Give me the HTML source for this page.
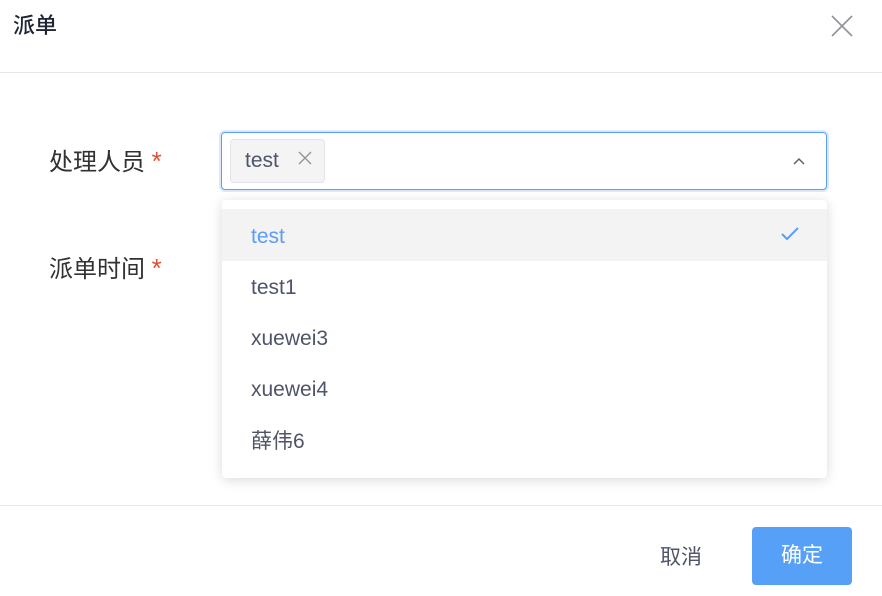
<!DOCTYPE html>
<html><head><meta charset="utf-8"><style>
*{margin:0;padding:0;box-sizing:border-box}
body{width:882px;height:596px;background:#fff;position:relative;overflow:hidden;font-family:"Liberation Sans","Noto Sans CJK SC",sans-serif;color:#606266}
.abs{position:absolute}
</style></head><body>
<div class="abs" style="left:13px;top:10px;font-size:22px;color:#1f2633;line-height:32px;font-weight:500">派单</div>
<svg class="abs" style="left:830px;top:14px" width="24" height="24" viewBox="0 0 24 24"><path d="M2 2L22 22M22 2L2 22" stroke="#909399" stroke-width="1.6" fill="none"/></svg>
<div class="abs" style="left:0;top:72px;width:882px;height:1px;background:#e4e7ed"></div>
<div class="abs" style="left:49px;top:145px;font-size:24px;line-height:32px;color:#303133">处理人员 <span style="color:#e0502f;font-size:26px">*</span></div>
<div class="abs" style="left:49px;top:252px;font-size:24px;line-height:32px;color:#303133">派单时间 <span style="color:#e0502f;font-size:26px">*</span></div>
<div class="abs" style="left:221px;top:132px;width:606px;height:58px;border:1px solid #5a9cf8;border-radius:4px;box-shadow:0 0 0 2px #dbe9fd"></div>
<div class="abs" style="left:230px;top:139px;width:95px;height:44px;background:#f4f4f5;border:1px solid #e4e4e7;border-radius:4px"></div>
<div class="abs" style="left:245px;top:147px;font-size:21px;line-height:28px;color:#4f5568">test</div>
<svg class="abs" style="left:298px;top:151px" width="14" height="14"><path d="M1 1L13 13M13 1L1 13" stroke="#909399" stroke-width="1.3"/></svg>
<svg class="abs" style="left:792px;top:156px" width="14" height="10"><path d="M2 8L7 3L12 8" stroke="#606266" stroke-width="1.5" fill="none"/></svg>
<div class="abs" style="left:222px;top:200px;width:605px;height:278px;background:#fff;border-radius:4px;box-shadow:0 2px 12px rgba(0,0,0,0.15)"></div>
<div class="abs" style="left:222px;top:209px;width:605px;height:52px;background:#f3f3f3"></div>
<div class="abs" style="left:251px;top:223px;font-size:21px;line-height:28px;color:#5a9cf8">test</div>
<svg class="abs" style="left:780px;top:226px" width="20" height="16"><path d="M2 8L7 13L18 2" stroke="#5a9cf8" stroke-width="2" fill="none"/></svg>
<div class="abs" style="left:251px;top:274px;font-size:21px;line-height:28px;color:#4f5568">test1</div>
<div class="abs" style="left:251px;top:325px;font-size:21px;line-height:28px;color:#4f5568">xuewei3</div>
<div class="abs" style="left:251px;top:376px;font-size:21px;line-height:28px;color:#4f5568">xuewei4</div>
<div class="abs" style="left:251px;top:428px;font-size:21px;line-height:28px;color:#4f5568">薛伟6</div>
<div class="abs" style="left:0;top:505px;width:882px;height:1px;background:#e4e7ed"></div>
<div class="abs" style="left:660px;top:543px;font-size:21px;line-height:30px;color:#4f5568">取消</div>
<div class="abs" style="left:752px;top:527px;width:100px;height:58px;background:#57a0f8;border-radius:4px;color:#fff;font-size:21px;line-height:58px;text-align:center">确定</div>
</body></html>
